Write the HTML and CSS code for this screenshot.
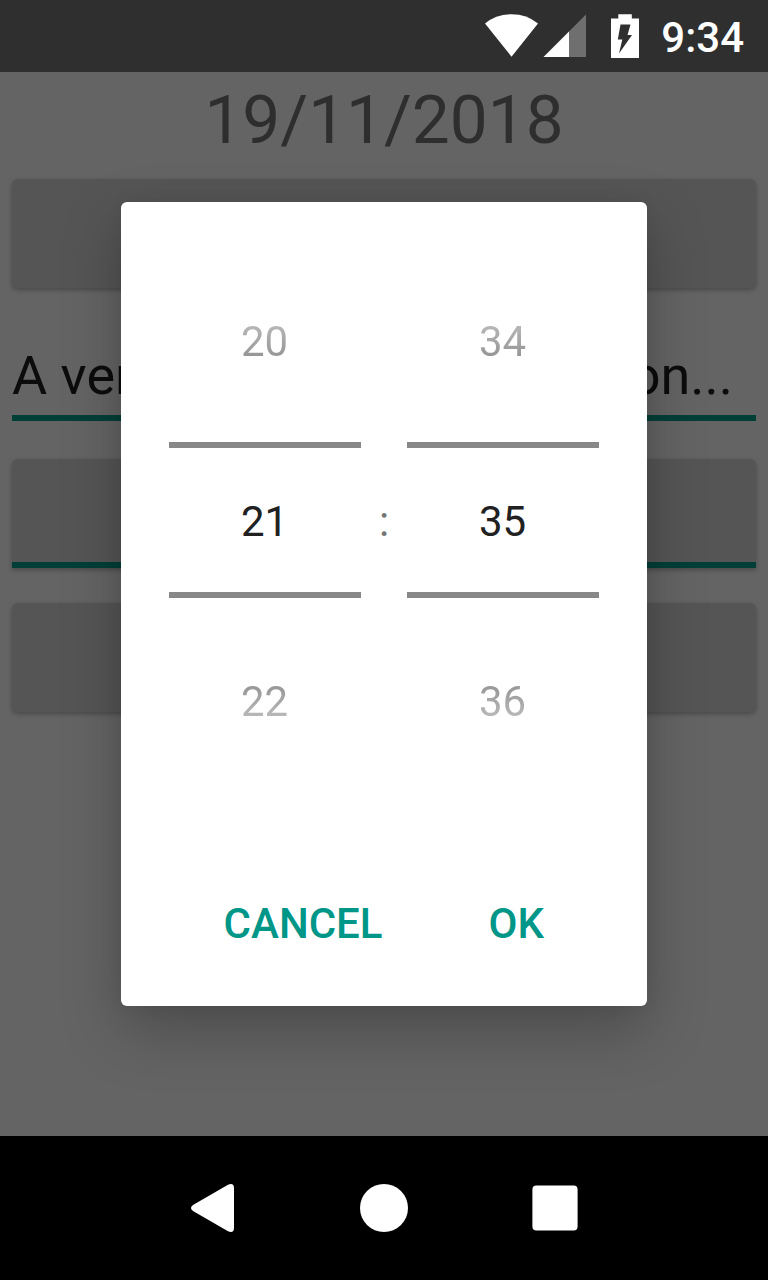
FILE: index.html
```html
<!DOCTYPE html>
<html lang="en">
<head>
<meta charset="utf-8">
<title>Time picker</title>
<link rel="stylesheet" href="styles.css">
</head>
<body>
<div class="screen">
  <header class="status-bar">
    <svg class="status-icons" width="160" height="72" viewBox="480 0 160 72" aria-hidden="true">
      <path fill="#fff" d="M511.500 56.700 485 23.500Q496 14.200 511.500 14.200T538 23.500Z"/>
      <path fill="#6f6f6f" d="M586 14.500V57H568V32.500Z"/>
      <path fill="#fff" d="M543.500 57 569 31.500V57Z"/>
      <path fill="#fff" d="M618.300 14.300h13.500v4.200h7.200V58h-28V18.500h7.300Z"/>
      <path fill="#2f2f2f" d="M620.500 24.500h10L627.500 35h4.500L619 53.500l3.300-14h-4.500Z"/>
    </svg>
    <span class="clock">9:34</span>
  </header>
  <main class="content">
    <h1 class="date">19/11/2018</h1>
    <div class="button"></div>
    <div class="field"><span>A very</span><span class="field-end">on...</span></div>
    <div class="button button-focused"></div>
    <div class="button"></div>
  </main>
  <nav class="nav-bar">
    <svg width="48" height="48" viewBox="0 0 48 48" aria-hidden="true"><path fill="#fff" d="M4 21 39 .7Q45-1.500 45 4V44Q45 49.500 39 47.300L4 27Q2 25.500 2 24T4 21Z"/></svg>
    <svg width="48" height="48" viewBox="0 0 48 48" aria-hidden="true"><circle cx="24" cy="24" r="24" fill="#fff"/></svg>
    <svg width="48" height="48" viewBox="0 0 48 48" aria-hidden="true"><rect x="1.400" y="1.400" width="45.200" height="45.200" rx="4" fill="#fff"/></svg>
  </nav>
  <section class="dialog" role="dialog">
    <div class="pickers">
      <div class="picker">
        <div class="option option-before">20</div>
        <div class="option-selected">21</div>
        <div class="option option-after">22</div>
      </div>
      <div class="separator">:</div>
      <div class="picker">
        <div class="option option-before">34</div>
        <div class="option-selected">35</div>
        <div class="option option-after">36</div>
      </div>
    </div>
    <div class="actions">
      <span>CANCEL</span>
      <span>OK</span>
    </div>
  </section>
</div>
</body>
</html>
```
FILE: styles.css
```css
* { box-sizing: border-box; }
body { margin: 0; font-family: Roboto, sans-serif; }
.screen {
  position: relative;
  display: flex;
  flex-direction: column;
  width: 768px;
  height: 1280px;
  overflow: hidden;
  background: #646464;
}
.status-bar {
  display: flex;
  justify-content: flex-end;
  height: 72px;
  padding-right: 24px;
  background: #2f2f2f;
  color: #fff;
}
.status-icons { margin-right: 21px; }
.clock { font-size: 42px; font-weight: 500; line-height: 75px; }
.content { flex: 1; padding: 0 12px; }
.date {
  margin: 0 0 11px;
  color: #2e2e2e;
  font-size: 67.5px;
  font-weight: 400;
  line-height: 96px;
  text-align: center;
}
.button {
  height: 109px;
  border-radius: 6px;
  background: #555;
  box-shadow: 0 2px 5px rgba(0, 0, 0, .28);
}
.field {
  display: flex;
  justify-content: space-between;
  height: 75px;
  margin: 58px 0 38px;
  border-bottom: 6px solid #003f38;
  color: #0c0c0c;
  font-size: 54px;
  line-height: 59px;
}
.field-end { padding-right: 23px; }
.button-focused {
  margin-bottom: 35px;
  border-bottom: 6px solid #003f38;
  border-radius: 6px 6px 0 0;
}
.nav-bar {
  display: flex;
  justify-content: center;
  align-items: center;
  gap: 123px;
  height: 144px;
  background: #000;
}
.dialog {
  position: absolute;
  left: 121px;
  top: 202px;
  width: 526px;
  height: 804px;
  padding: 50px 48px 0;
  border-radius: 6px;
  background: #fff;
  box-shadow: 0 24px 60px rgba(0, 0, 0, .25), 0 0 16px rgba(0, 0, 0, .06);
}
.pickers { display: flex; align-items: center; height: 540px; font-size: 42px; }
.picker { width: 192px; text-align: center; }
.option { height: 180px; padding-right: 1px; line-height: 180px; color: transparent; -webkit-background-clip: text; background-clip: text; }
.option-before { background-image: linear-gradient(#b8b8b8 73px, #969696 104px); }
.option-after { background-image: linear-gradient(#969696 73px, #b8b8b8 104px); }
.option-selected {
  height: 156px;
  margin: 10px 0 14px;
  padding: 2px 1px 0 0;
  border-top: 6px solid #888;
  border-bottom: 6px solid #888;
  color: #212121;
  line-height: 144px;
}
.separator { width: 46px; padding-bottom: 1px; color: #757575; text-align: center; }
.actions {
  display: flex;
  justify-content: flex-end;
  gap: 106px;
  padding: 96px 55px 0 0;
  color: #009688;
  font-size: 42px;
  font-weight: 500;
  line-height: 72px;
}
```
